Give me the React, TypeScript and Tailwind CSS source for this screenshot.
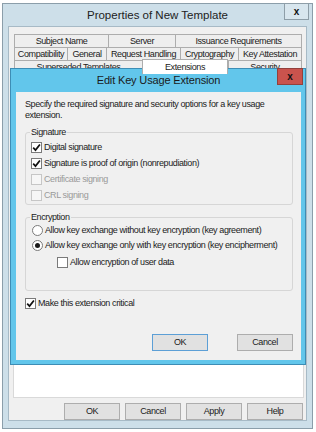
import React from "react";

const ROW1 = [
  ["Subject Name", "w-[94px]"],
  ["Server", "w-[67px]"],
  ["Issuance Requirements", "w-[127px] border-r"],
];
const ROW2 = [
  ["Compatibility", "w-[53px]"],
  ["General", "w-[39px]"],
  ["Request Handling", "w-[74px]"],
  ["Cryptography", "w-[58px]"],
  ["Key Attestation", "w-[64px] border-r"],
];

function Tab({ label, cls }: { label: string; cls: string }) {
  return (
    <div
      className={`flex h-[13px] items-center justify-center overflow-hidden whitespace-nowrap border-l border-t border-[#adadad] bg-[#eeeeee] ${cls}`}
    >
      {label}
    </div>
  );
}

function Box({ checked = false, disabled = false }: { checked?: boolean; disabled?: boolean }) {
  return (
    <span
      className={`flex h-[11px] w-[11px] shrink-0 items-center justify-center border ${
        disabled ? "border-[#c6c6c6] bg-[#f6f6f6]" : "border-[#7a7a7a] bg-white"
      }`}
    >
      {checked && (
        <svg width="9" height="9" viewBox="0 0 9 9">
          <path d="M1.2 4.6 3.5 7.1 7.9 1.4" fill="none" stroke="#111" strokeWidth="1.7" />
        </svg>
      )}
    </span>
  );
}

function Radio({ checked = false }: { checked?: boolean }) {
  return (
    <span className="flex h-[11px] w-[11px] shrink-0 items-center justify-center rounded-full border border-[#7a7a7a] bg-white">
      {checked && <span className="h-[5px] w-[5px] rounded-full bg-[#1a1a1a]" />}
    </span>
  );
}

function Btn({ label, primary = false }: { label: string; primary?: boolean }) {
  return (
    <div
      className={`flex h-[17px] w-[56px] items-center justify-center border bg-[#e1e1e1] ${
        primary ? "border-[#5c9fd6]" : "border-[#adadad]"
      }`}
    >
      {label}
    </div>
  );
}

export default function App() {
  return (
    <div className="relative h-[432px] w-[316px] overflow-hidden bg-white font-['Liberation_Sans',Arial,sans-serif] text-[9px] leading-[11px] tracking-[-0.4px] text-[#1b1b1b]">
      {/* outer property sheet window */}
      <div className="relative ml-[2px] mt-[3px] flex h-[426px] w-[311px] flex-col border border-[#8b9eaa] bg-[#cddfe9]">
        <div className="flex h-[22px] items-center justify-center text-[11.5px] tracking-normal text-[#222]">
          Properties of New Template
        </div>
        <div className="absolute right-[3px] top-[-1px] flex h-[17px] w-[25px] items-center justify-center border border-[#8e9ea8] bg-[#d8e6ee] text-[10px] font-bold tracking-normal text-[#111]">
          x
        </div>

        <div className="mx-[5px] mb-[7px] flex flex-1 flex-col border border-[#a7bac6] bg-[#f0f0f0] pt-[7px]">
          <div className="ml-[5px] flex w-[288px] flex-col">
            <div className="flex">
              {ROW1.map(([l, c]) => (
                <Tab key={l} label={l} cls={c} />
              ))}
            </div>
            <div className="flex">
              {ROW2.map(([l, c]) => (
                <Tab key={l} label={l} cls={c} />
              ))}
            </div>
            <div className="flex items-start">
              <Tab label="Superseded Templates" cls="w-[128px]" />
              <div className="relative z-10 -mt-px flex h-[15px] w-[86px] items-center justify-center border-x border-t border-[#adadad] bg-white">
                Extensions
              </div>
              <Tab label="Security" cls="w-[74px] border-r" />
            </div>
          </div>
          <div className="ml-[4px] h-[324px] w-[291px] border border-[#d9d9d9] bg-white" />
          <div className="mt-[5px] flex justify-end gap-[5px] pr-[3px]">
            <Btn label="OK" />
            <Btn label="Cancel" />
            <Btn label="Apply" />
            <Btn label="Help" />
          </div>
        </div>
      </div>

      {/* modal dialog */}
      <div className="absolute left-[10px] top-[68px] flex h-[297px] w-[296px] flex-col border border-[#3d8db5] bg-[#62c6eb] pb-[4px] pl-[5px] pr-[4px]">
        <div className="flex h-[23px] items-center justify-center text-[11px] tracking-[-0.15px] text-[#1a1a1a]">
          Edit Key Usage Extension
        </div>
        <div className="absolute right-[2px] top-[-1px] flex h-[17px] w-[26px] items-center justify-center border border-[#93403b] bg-[#c9534d] text-[10px] font-bold tracking-normal text-[#111]">
          x
        </div>

        <div className="flex flex-1 flex-col bg-[#f0f0f0] pl-[9px] pr-[8px] pt-[7px]">
          <p className="w-[268px]">
            Specify the required signature and security options for a key usage extension.
          </p>

          <fieldset className="mt-[6px] w-[268px] rounded-[3px] border border-[#d6d6d6] pb-px">
            <legend className="ml-[4px] px-px">Signature</legend>
            <div className="flex flex-col pl-[5px] pt-px">
              <div className="flex h-[16px] items-center gap-[2px]">
                <Box checked />
                <span>Digital signature</span>
              </div>
              <div className="flex h-[16px] items-center gap-[2px]">
                <Box checked />
                <span>Signature is proof of origin (nonrepudiation)</span>
              </div>
              <div className="flex h-[16px] items-center gap-[2px] text-[#9a9a9a]">
                <Box disabled />
                <span>Certificate signing</span>
              </div>
              <div className="flex h-[16px] items-center gap-[2px] text-[#9a9a9a]">
                <Box disabled />
                <span>CRL signing</span>
              </div>
            </div>
          </fieldset>

          <fieldset className="mt-[7px] w-[268px] rounded-[3px] border border-[#d6d6d6] pb-[20px]">
            <legend className="ml-[4px] px-px">Encryption</legend>
            <div className="flex flex-col pl-[6px]">
              <div className="flex h-[15px] items-center gap-[2px]">
                <Radio />
                <span>Allow key exchange without key encryption (key agreement)</span>
              </div>
              <div className="flex h-[15px] items-center gap-[2px]">
                <Radio checked />
                <span>Allow key exchange only with key encryption (key encipherment)</span>
              </div>
              <div className="mt-[2px] flex h-[15px] items-center gap-[2px] pl-[25px]">
                <Box />
                <span>Allow encryption of user data</span>
              </div>
            </div>
          </fieldset>

          <div className="mt-[4px] flex h-[16px] items-center gap-[2px]">
            <Box checked />
            <span>Make this extension critical</span>
          </div>

          <div className="mt-[23px] flex justify-end gap-[29px]">
            <Btn label="OK" primary />
            <Btn label="Cancel" />
          </div>
        </div>
      </div>
    </div>
  );
}
